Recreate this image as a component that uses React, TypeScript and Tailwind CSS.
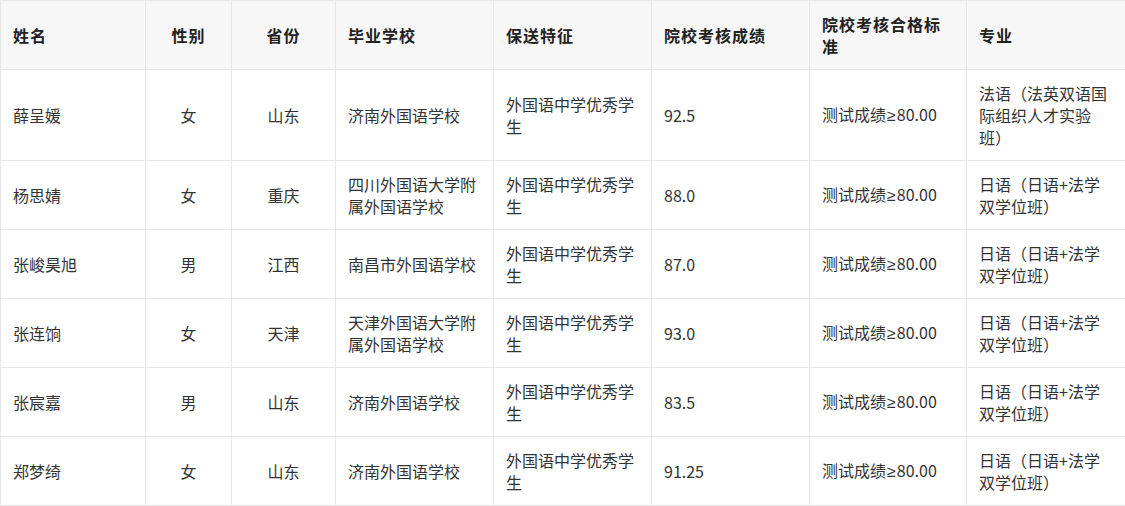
import React from "react";

const headers = ["姓名", "性别", "省份", "毕业学校", "保送特征", "院校考核成绩", "院校考核合格标准", "专业"];

const rows: string[][] = [
  ["薛呈媛", "女", "山东", "济南外国语学校", "外国语中学优秀学生", "92.5", "测试成绩≥80.00", "法语（法英双语国际组织人才实验班）"],
  ["杨思婧", "女", "重庆", "四川外国语大学附属外国语学校", "外国语中学优秀学生", "88.0", "测试成绩≥80.00", "日语（日语+法学双学位班）"],
  ["张峻昊旭", "男", "江西", "南昌市外国语学校", "外国语中学优秀学生", "87.0", "测试成绩≥80.00", "日语（日语+法学双学位班）"],
  ["张连饷", "女", "天津", "天津外国语大学附属外国语学校", "外国语中学优秀学生", "93.0", "测试成绩≥80.00", "日语（日语+法学双学位班）"],
  ["张宸嘉", "男", "山东", "济南外国语学校", "外国语中学优秀学生", "83.5", "测试成绩≥80.00", "日语（日语+法学双学位班）"],
  ["郑梦绮", "女", "山东", "济南外国语学校", "外国语中学优秀学生", "91.25", "测试成绩≥80.00", "日语（日语+法学双学位班）"],
];

const widths = [145, 86, 104, 158, 158, 158, 157, 159];

function Cell({ text }: { text: string }) {
  const idx = text.indexOf("≥");
  if (idx < 0) return <>{text}</>;
  return (
    <>
      {text.slice(0, idx)}
      <span className="font-['Liberation_Sans'] px-[1px]">≥</span>
      {text.slice(idx + 1)}
    </>
  );
}

export default function App() {
  return (
    <div className="bg-white w-[1125px] h-[506px] overflow-hidden" style={{ fontFamily: '"Noto Sans CJK SC", "Noto Sans", sans-serif' }}>
      <table className="table-fixed border-collapse w-[1125px] text-[16px] leading-[22px]">
        <colgroup>
          {widths.map((w, i) => (
            <col key={i} style={{ width: w }} />
          ))}
        </colgroup>
        <thead>
          <tr className="bg-[#f7f7f7]">
            {headers.map((h, i) => (
              <th
                key={i}
                className={`border border-[#e6e6e6] px-3 py-3 font-bold text-[#222] tracking-[1px] align-middle ${i === 1 || i === 2 ? "text-center" : "text-left"}`}
              >
                {h}
              </th>
            ))}
          </tr>
        </thead>
        <tbody>
          {rows.map((r, ri) => (
            <tr key={ri}>
              {r.map((c, ci) => (
                <td
                  key={ci}
                  className={`border border-[#e6e6e6] px-3 py-3 text-[#333] align-middle ${ci === 1 || ci === 2 ? "text-center" : "text-left"}`}
                >
                  <Cell text={c} />
                </td>
              ))}
            </tr>
          ))}
        </tbody>
      </table>
    </div>
  );
}
